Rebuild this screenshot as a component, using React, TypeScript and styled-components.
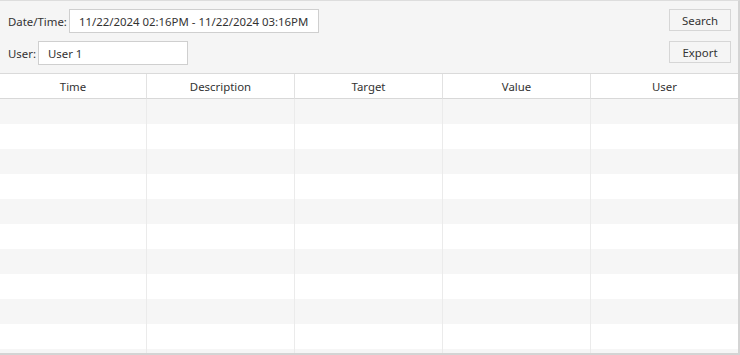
import React from "react";
import styled, { createGlobalStyle } from "styled-components";

const GlobalStyle = createGlobalStyle`
  html, body {
    margin: 0;
    padding: 0;
    background: #ffffff;
  }
  body {
    font-family: "Noto Sans", "Open Sans", sans-serif;
    color: #333333;
  }
`;

const COLUMNS = ["Time", "Description", "Target", "Value", "User"];
const ROW_COUNT = 11;

const Frame = styled.div`
  width: 740px;
  height: 355px;
  box-sizing: border-box;
  border-top: 1px solid #dddddd;
  border-right: 2px solid #d4d4d4;
  border-bottom: 2px solid #d4d4d4;
  overflow: hidden;
  display: flex;
  flex-direction: column;
  background: #ffffff;
`;

const Toolbar = styled.div`
  display: flex;
  justify-content: space-between;
  align-items: flex-start;
  padding: 8px 7px 8px 8px;
  background: #f5f5f5;
  border-bottom: 1px solid #dadada;
`;

const Fields = styled.div`
  display: flex;
  flex-direction: column;
  gap: 8px;
`;

const Field = styled.label`
  display: flex;
  align-items: center;
  gap: 2px;
  font-size: 11.4px;
  color: #333333;
`;

const Input = styled.div<{ $width: number }>`
  box-sizing: border-box;
  width: ${({ $width }) => $width}px;
  height: 24px;
  padding: 0 9px;
  display: flex;
  align-items: center;
  background: #ffffff;
  border: 1px solid #cfcfcf;
  font-size: 11.4px;
  color: #333333;
  white-space: nowrap;
`;

const Buttons = styled.div`
  display: flex;
  flex-direction: column;
  gap: 10px;
`;

const Button = styled.button`
  box-sizing: border-box;
  width: 62px;
  height: 22px;
  padding: 0;
  background: #f5f5f5;
  border: 1px solid #d6d6d6;
  font-family: inherit;
  font-size: 11.4px;
  color: #333333;
  cursor: pointer;
`;

const Grid = styled.div`
  display: grid;
  grid-template-columns: 147px 148px 148px 148px 1fr;
`;

const HeaderCell = styled.div`
  height: 24px;
  display: flex;
  align-items: center;
  justify-content: center;
  font-size: 11.4px;
  color: #333333;
  border-bottom: 1px solid #d8d8d8;
  border-right: 1px solid #e2e2e2;
  &:last-child {
    border-right: none;
  }
`;

const Body = styled.div`
  flex: 1;
  overflow: hidden;
`;

const Row = styled(Grid)<{ $odd: boolean }>`
  height: 25px;
  background: ${({ $odd }) => ($odd ? "#f6f6f6" : "#ffffff")};
`;

const Cell = styled.div`
  border-right: 1px solid #ebebeb;
  &:last-child {
    border-right: none;
  }
`;

export default function App() {
  return (
    <>
      <GlobalStyle />
      <Frame>
        <Toolbar>
          <Fields>
            <Field>
              Date/Time:
              <Input $width={250}>11/22/2024 02:16PM - 11/22/2024 03:16PM</Input>
            </Field>
            <Field>
              User:
              <Input $width={150}>User 1</Input>
            </Field>
          </Fields>
          <Buttons>
            <Button>Search</Button>
            <Button>Export</Button>
          </Buttons>
        </Toolbar>
        <Grid>
          {COLUMNS.map((c) => (
            <HeaderCell key={c}>{c}</HeaderCell>
          ))}
        </Grid>
        <Body>
          {Array.from({ length: ROW_COUNT }).map((_, i) => (
            <Row key={i} $odd={i % 2 === 0}>
              {COLUMNS.map((c) => (
                <Cell key={c} />
              ))}
            </Row>
          ))}
        </Body>
      </Frame>
    </>
  );
}
